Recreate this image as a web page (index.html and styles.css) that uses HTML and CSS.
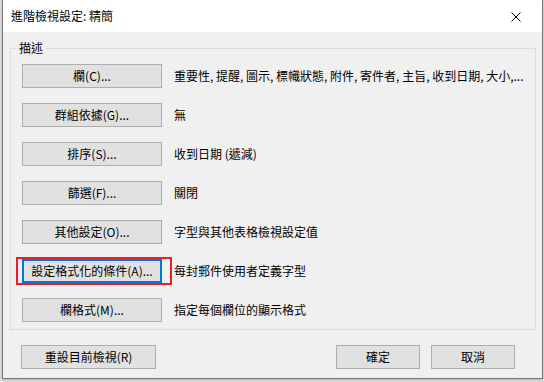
FILE: index.html
```html
<!DOCTYPE html>
<html lang="zh-Hant">
<head>
<meta charset="utf-8">
<title>進階檢視設定: 精簡</title>
<link rel="stylesheet" href="styles.css">
</head>
<body>
<div class="window">
  <div class="titlebar">
    <span class="title">進階檢視設定: 精簡</span>
    <span class="close">
      <svg width="10" height="10" viewBox="0 0 10 10"><path d="M0.5 0.5 L9.5 9.5 M9.5 0.5 L0.5 9.5" stroke="#000" stroke-width="1" fill="none"/></svg>
    </span>
  </div>
  <div class="client">
    <fieldset class="group">
      <legend>描述</legend>
      <div class="rows">
        <div class="row"><button class="btn wide">欄(C)...</button><span class="desc">重要性, 提醒, 圖示, 標幟狀態, 附件, 寄件者, 主旨, 收到日期, 大小,...</span></div>
        <div class="row"><button class="btn wide">群組依據(G)...</button><span class="desc">無</span></div>
        <div class="row"><button class="btn wide">排序(S)...</button><span class="desc">收到日期 (遞減)</span></div>
        <div class="row"><button class="btn wide">篩選(F)...</button><span class="desc">關閉</span></div>
        <div class="row"><button class="btn wide">其他設定(O)...</button><span class="desc">字型與其他表格檢視設定值</span></div>
        <div class="row"><button class="btn wide focused">設定格式化的條件(A)...<span class="mark"></span></button><span class="desc">每封郵件使用者定義字型</span></div>
        <div class="row"><button class="btn wide">欄格式(M)...</button><span class="desc">指定每個欄位的顯示格式</span></div>
      </div>
    </fieldset>
    <div class="footer">
      <button class="btn reset">重設目前檢視(R)</button>
      <div class="spacer"></div>
      <button class="btn small">確定</button>
      <button class="btn small">取消</button>
    </div>
  </div>
</div>
</body>
</html>
```
FILE: styles.css
```css
* { box-sizing: border-box; }
html, body { margin: 0; padding: 0; }
body {
  background: #e4e4e4;
  width: 544px;
  height: 382px;
  overflow: hidden;
  font-family: "Noto Sans CJK TC", "Noto Sans", sans-serif;
  font-size: 12px;
  color: #000;
}
.window {
  margin-left: 2px;
  width: 541px;
  height: 379px;
  border: 1px solid #767676;
  border-top: none;
  background: #f0f0f0;
  display: flex;
  flex-direction: column;
  box-shadow: 0 1px 3px rgba(0,0,0,0.25);
}
.titlebar {
  height: 32px;
  background: #fff;
  display: flex;
  align-items: center;
  padding-left: 8px;
  padding-bottom: 1px;
}
.title {
  flex: 1;
  font-size: 12px;
  line-height: 14px;
}
.close {
  width: 46px;
  height: 31px;
  display: flex;
  align-items: center;
  justify-content: center;
  margin-right: 3px;
  padding-top: 2px;
}
.close svg { display: block; }
.client {
  flex: 1;
  padding: 9px 6px 0 7px;
  display: flex;
  flex-direction: column;
}
.group {
  margin: 0;
  border: 1px solid #dcdcdc;
  padding: 9px 6px 7px 11px;
  min-width: 0;
}
.group legend {
  padding: 0 3px;
  margin-left: -6px;
  font-size: 12px;
  line-height: 14px;
}
.rows {
  display: flex;
  flex-direction: column;
  gap: 15px;
}
.row {
  display: flex;
  align-items: center;
  gap: 12px;
}
.btn {
  position: relative;
  height: 24px;
  background: #e1e1e1;
  border: 1px solid #adadad;
  border-radius: 0;
  font-family: "Noto Sans CJK TC", "Noto Sans", sans-serif;
  font-size: 12px;
  line-height: 14px;
  color: #000;
  padding: 0;
  text-align: center;
}
.btn.wide { width: 140px; }
.btn.focused {
  border: 2px solid #0078d7;
}
.mark {
  position: absolute;
  left: -8px;
  right: -12px;
  top: -4px;
  bottom: -4px;
  border: 2px solid #ee1c24;
  pointer-events: none;
}
.desc {
  white-space: nowrap;
  line-height: 14px;
}
.footer {
  display: flex;
  align-items: center;
  margin-top: 15px;
  padding-left: 11px;
  padding-right: 21px;
  gap: 11px;
}
.spacer { flex: 1; }
.btn.reset { width: 135px; }
.btn.small { width: 84px; }
```
